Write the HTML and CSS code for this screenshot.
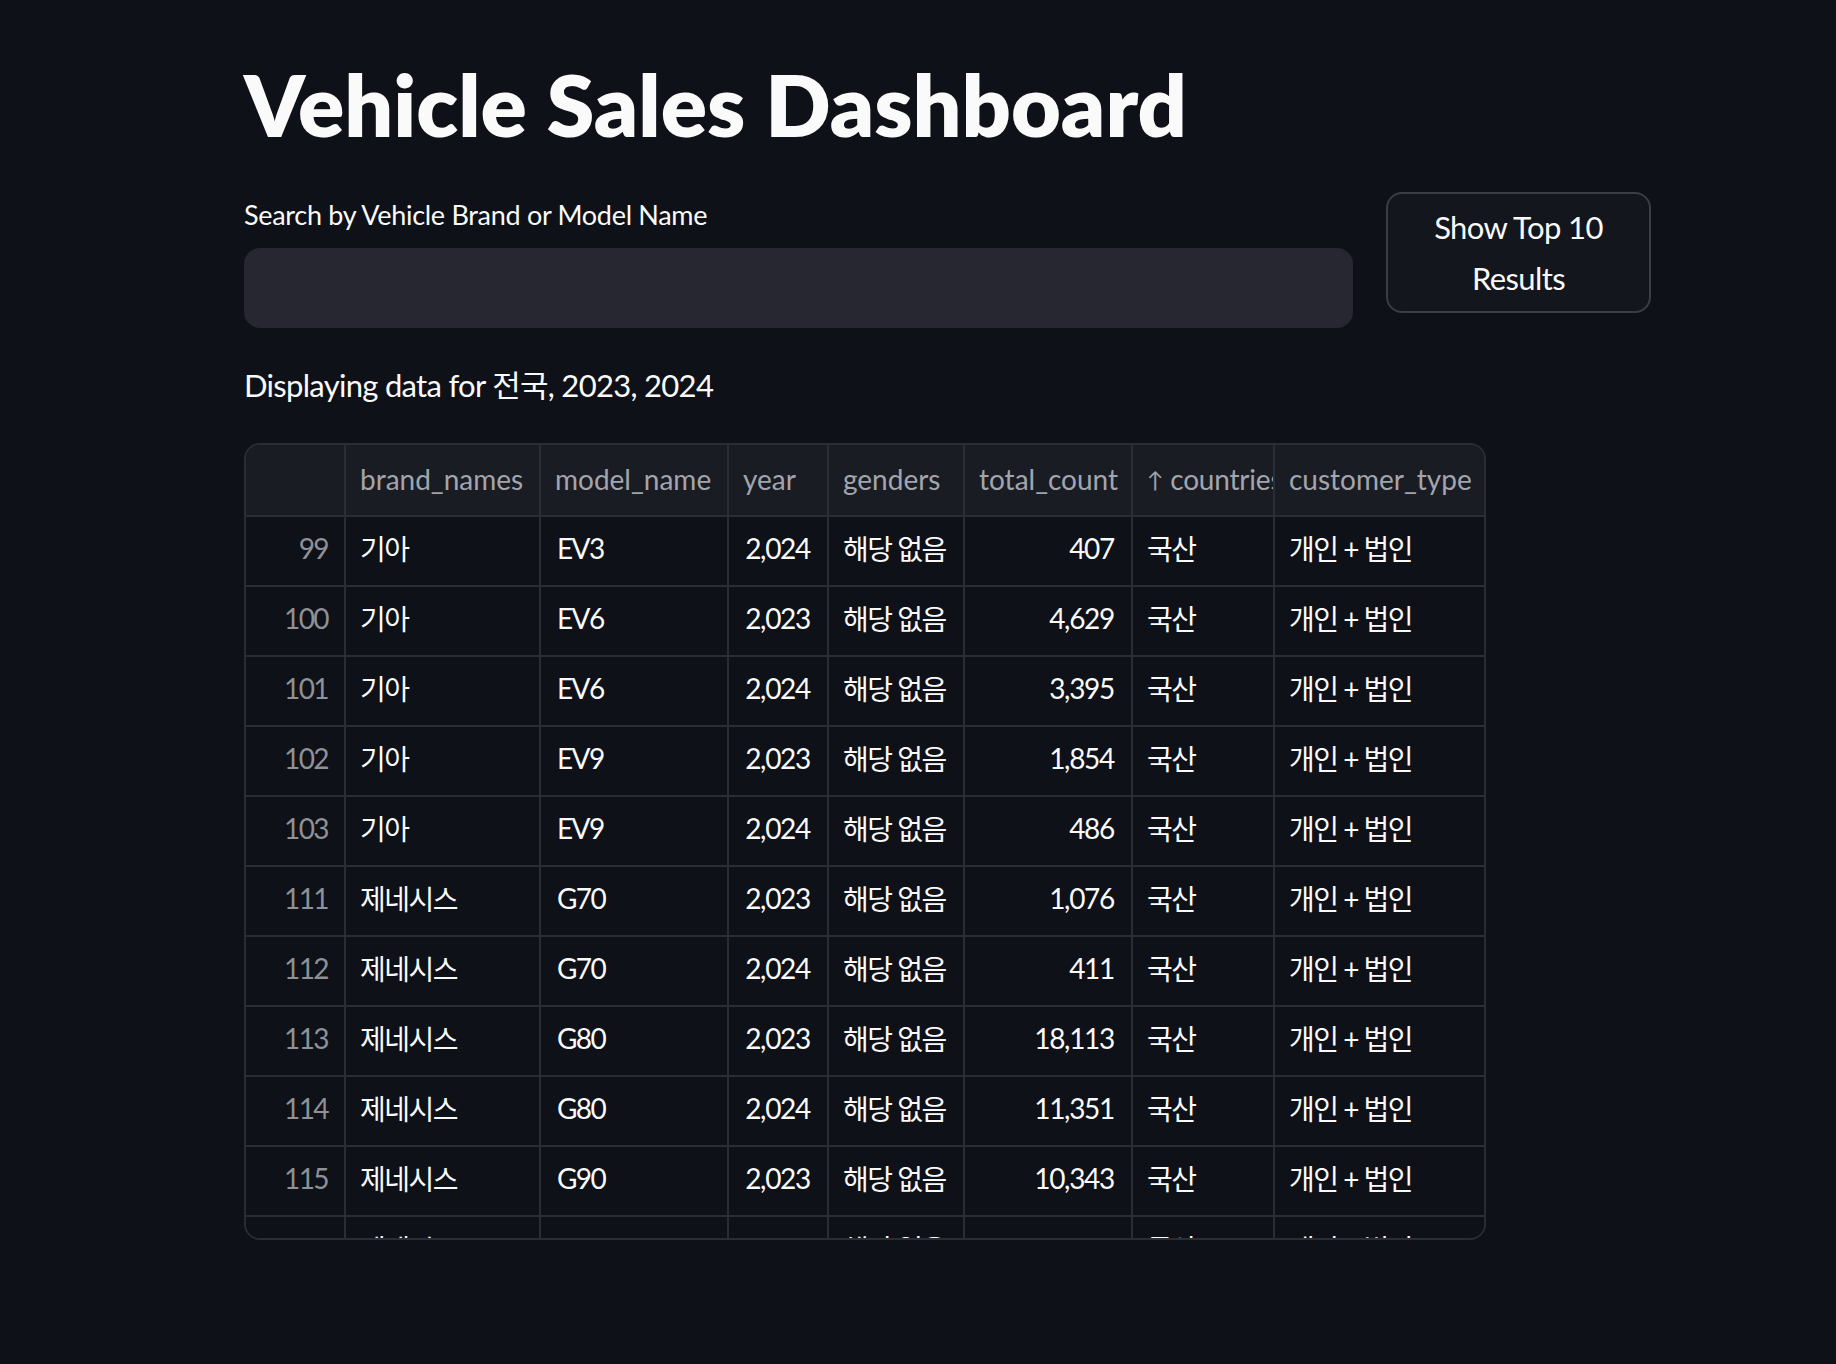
FILE: index.html
```html
<!DOCTYPE html>
<html lang="ko">
<head>
<meta charset="utf-8">
<title>Vehicle Sales Dashboard</title>
<link rel="stylesheet" href="styles.css">
</head>
<body>
<main class="page">
  <h1 class="title">Vehicle Sales Dashboard</h1>
  <div class="search-row">
    <div class="search-col">
      <label class="label" for="q">Search by Vehicle Brand or Model Name</label>
      <input id="q" class="search-input" type="text">
    </div>
    <div class="button-col">
      <button class="top-btn">Show Top 10 Results</button>
    </div>
  </div>
  <p class="caption">Displaying data for 전국, 2023, 2024</p>
  <div class="grid-wrap">
    <table class="grid">
      <colgroup>
        <col class="c-idx"><col class="c-brand"><col class="c-model"><col class="c-year"><col class="c-gender"><col class="c-total"><col class="c-country"><col class="c-cust">
      </colgroup>
      <thead>
        <tr>
          <th></th>
          <th>brand_names</th>
          <th>model_name</th>
          <th>year</th>
          <th>genders</th>
          <th>total_count</th>
          <th class="sorted"><span class="arrow">↑</span> countries</th>
          <th class="last">customer_type</th>
        </tr>
      </thead>
      <tbody>
        <tr><td class="idx">99</td><td class="ko">기아</td><td class="code">EV3</td><td class="num">2,024</td><td class="ko">해당 없음</td><td class="num">407</td><td class="ko">국산</td><td class="ko last">개인 + 법인</td></tr>
        <tr><td class="idx">100</td><td class="ko">기아</td><td class="code">EV6</td><td class="num">2,023</td><td class="ko">해당 없음</td><td class="num">4,629</td><td class="ko">국산</td><td class="ko last">개인 + 법인</td></tr>
        <tr><td class="idx">101</td><td class="ko">기아</td><td class="code">EV6</td><td class="num">2,024</td><td class="ko">해당 없음</td><td class="num">3,395</td><td class="ko">국산</td><td class="ko last">개인 + 법인</td></tr>
        <tr><td class="idx">102</td><td class="ko">기아</td><td class="code">EV9</td><td class="num">2,023</td><td class="ko">해당 없음</td><td class="num">1,854</td><td class="ko">국산</td><td class="ko last">개인 + 법인</td></tr>
        <tr><td class="idx">103</td><td class="ko">기아</td><td class="code">EV9</td><td class="num">2,024</td><td class="ko">해당 없음</td><td class="num">486</td><td class="ko">국산</td><td class="ko last">개인 + 법인</td></tr>
        <tr><td class="idx">111</td><td class="ko">제네시스</td><td class="code">G70</td><td class="num">2,023</td><td class="ko">해당 없음</td><td class="num">1,076</td><td class="ko">국산</td><td class="ko last">개인 + 법인</td></tr>
        <tr><td class="idx">112</td><td class="ko">제네시스</td><td class="code">G70</td><td class="num">2,024</td><td class="ko">해당 없음</td><td class="num">411</td><td class="ko">국산</td><td class="ko last">개인 + 법인</td></tr>
        <tr><td class="idx">113</td><td class="ko">제네시스</td><td class="code">G80</td><td class="num">2,023</td><td class="ko">해당 없음</td><td class="num">18,113</td><td class="ko">국산</td><td class="ko last">개인 + 법인</td></tr>
        <tr><td class="idx">114</td><td class="ko">제네시스</td><td class="code">G80</td><td class="num">2,024</td><td class="ko">해당 없음</td><td class="num">11,351</td><td class="ko">국산</td><td class="ko last">개인 + 법인</td></tr>
        <tr><td class="idx">115</td><td class="ko">제네시스</td><td class="code">G90</td><td class="num">2,023</td><td class="ko">해당 없음</td><td class="num">10,343</td><td class="ko">국산</td><td class="ko last">개인 + 법인</td></tr>
        <tr><td class="idx">116</td><td class="ko">제네시스</td><td class="code">G90</td><td class="num">2,024</td><td class="ko">해당 없음</td><td class="num">1,210</td><td class="ko">국산</td><td class="ko last">개인 + 법인</td></tr>
      </tbody>
    </table>
  </div>
</main>
</body>
</html>
```
FILE: styles.css
```css
html, body {
  margin: 0;
  padding: 0;
  background: #0e1117;
}
body {
  font-family: Lato, "Noto Sans CJK KR", sans-serif;
  color: #fafafa;
  height: 1364px;
  overflow: hidden;
}
.page {
  width: 1407px;
  margin-left: 244px;
  padding-top: 51px;
}
.title {
  margin: 0;
  font-size: 86px;
  font-weight: 800;
  line-height: 105.6px;
  color: #fafafa;
}
.search-row {
  display: flex;
  align-items: flex-start;
  gap: 33px;
  margin-top: 32px;
}
.search-col {
  width: 1110px;
  display: flex;
  flex-direction: column;
}
.label {
  font-size: 27px;
  letter-spacing: -0.3px;
  line-height: 44.8px;
  color: #fafafa;
  padding-top: 4px;
  margin-bottom: 11px;
}
.search-input {
  box-sizing: border-box;
  height: 80px;
  width: 100%;
  background: #262730;
  border: 2px solid #262730;
  border-radius: 16px;
  outline: none;
  color: #fafafa;
  font-family: inherit;
  font-size: 32px;
  padding: 0 24px;
}
.button-col {
  width: 265px;
  padding-top: 3px;
}
.top-btn {
  box-sizing: border-box;
  width: 265px;
  height: 121px;
  background: #13161d;
  border: 2px solid #3b3d45;
  border-radius: 16px;
  color: #fafafa;
  font-family: inherit;
  font-size: 31px;
  letter-spacing: -0.6px;
  line-height: 51px;
  padding: 8px 24px;
}
.caption {
  margin: 32px 0 0;
  font-size: 31px;
  letter-spacing: -0.7px;
  line-height: 51.2px;
  color: #fafafa;
}
.grid-wrap {
  box-sizing: border-box;
  margin-top: 31px;
  width: 1242px;
  height: 797px;
  border: 2px solid #2b2d34;
  border-radius: 16px;
  overflow: hidden;
  background: #0e1117;
}
.grid {
  border-collapse: separate;
  border-spacing: 0;
  table-layout: fixed;
  width: 1238px;
  font-size: 28px;
}
.c-idx { width: 100px; }
.c-brand { width: 195px; }
.c-model { width: 188px; }
.c-year { width: 100px; }
.c-gender { width: 136px; }
.c-total { width: 168px; }
.c-country { width: 142px; }
.c-cust { width: 209px; }
.grid th, .grid td {
  box-sizing: border-box;
  height: 70px;
  padding: 0 14px 5px 14px;
  border-right: 2px solid #2b2d34;
  border-bottom: 2px solid #2b2d34;
  white-space: nowrap;
  overflow: hidden;
  text-align: left;
  vertical-align: middle;
}
.grid th {
  background: #1a1c24;
  color: #a3a5ad;
  font-weight: 400;
  height: 72px;
  padding-bottom: 1px;
}
.grid th.sorted {
  letter-spacing: -0.2px;
}
.grid td {
  color: #fafafa;
  background: #0e1117;
}
.grid td.ko {
  letter-spacing: -1.5px;
}
.grid td.code {
  letter-spacing: -1.6px;
  padding-left: 16px;
}
.grid .last {
  border-right: none;
}
.grid td.idx {
  text-align: right;
  color: #8f9196;
  letter-spacing: -1.6px;
  padding-right: 16px;
}
.grid td.num {
  text-align: right;
  letter-spacing: -1.3px;
  padding-right: 17px;
}
.arrow {
  font-size: 22px;
  position: relative;
  top: -2px;
}
```
